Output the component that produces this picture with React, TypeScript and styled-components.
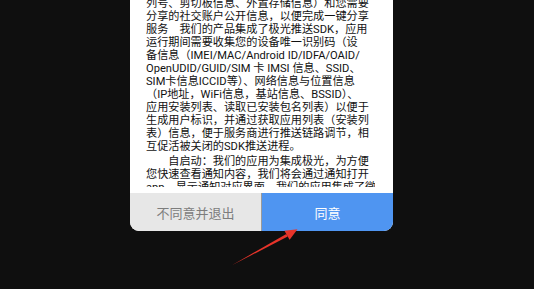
import React from "react";
import styled, { createGlobalStyle } from "styled-components";

const Global = createGlobalStyle`
  html, body { margin: 0; padding: 0; background: #0f0f0f; }
  body { width: 534px; height: 289px; overflow: hidden; }
`;

const Page = styled.div`
  position: relative;
  width: 534px;
  height: 289px;
  background: #0f0f0f;
  display: flex;
  align-items: flex-start;
  padding-left: 130px;
  box-sizing: border-box;
`;

const Dialog = styled.div`
  width: 263px;
  background: #ffffff;
  border-radius: 0 0 9px 9px;
  overflow: hidden;
  display: flex;
  flex-direction: column;
`;

const Body = styled.div`
  padding: 0 18px 6px 16px;
`;

const Scroll = styled.div`
  height: 187px;
  overflow: hidden;
`;

const Content = styled.div`
  margin-top: -3.2px;
  font-family: "Roboto", "Noto Sans CJK SC", sans-serif;
  font-size: 11.15px;
  line-height: 13px;
  color: #111111;
`;

const Para = styled.p<{ $gap?: boolean }>`
  margin: ${(p) => (p.$gap ? "2.6px 0 0" : "0")};
`;

const Line = styled.span`
  display: block;
  white-space: nowrap;
`;

const Buttons = styled.div`
  display: flex;
  height: 38px;
`;

const Btn = styled.button<{ $primary?: boolean }>`
  flex: 1;
  border: none;
  margin: 0;
  padding: 0;
  font-family: "Roboto", "Noto Sans CJK SC", sans-serif;
  font-size: 13px;
  background: ${(p) => (p.$primary ? "#4f95f1" : "#e7e7e7")};
  color: ${(p) => (p.$primary ? "#ffffff" : "#7d7d7d")};
  border-left: ${(p) => (p.$primary ? "1px solid #9a9a9a" : "none")};
  display: flex;
  align-items: center;
  justify-content: center;
`;

const Arrow = styled.svg`
  position: absolute;
  left: 0;
  top: 0;
  pointer-events: none;
`;

const para1 = [
  "列号、剪切板信息、外置存储信息）和您需要",
  "分享的社交账户公开信息，以便完成一键分享",
  "服务　我们的产品集成了极光推送SDK，应用",
  "运行期间需要收集您的设备唯一识别码（设",
  "备信息（IMEI/MAC/Android ID/IDFA/OAID/",
  "OpenUDID/GUID/SIM 卡 IMSI 信息、SSID、",
  "SIM卡信息ICCID等）、网络信息与位置信息",
  "（IP地址，WiFi信息，基站信息、BSSID）、",
  "应用安装列表、读取已安装包名列表）以便于",
  "生成用户标识，并通过获取应用列表（安装列",
  "表）信息，便于服务商进行推送链路调节，相",
  "互促活被关闭的SDK推送进程。",
];

const para2 = [
  "　　自启动：我们的应用为集成极光，为方便",
  "您快速查看通知内容，我们将会通过通知打开",
  "app，显示通知对应界面。我们的应用集成了微",
];

export default function App() {
  return (
    <>
      <Global />
      <Page>
        <Dialog>
          <Body>
            <Scroll>
              <Content>
                <Para>
                  {para1.map((l, i) => (
                    <Line key={i}>{l}</Line>
                  ))}
                </Para>
                <Para $gap>
                  {para2.map((l, i) => (
                    <Line key={i}>{l}</Line>
                  ))}
                </Para>
              </Content>
            </Scroll>
          </Body>
          <Buttons>
            <Btn>不同意并退出</Btn>
            <Btn $primary>同意</Btn>
          </Buttons>
        </Dialog>
        <Arrow width="534" height="289" viewBox="0 0 534 289">
          <polygon points="232.3,265 287.7,236.6 286.3,233.9" fill="#e8342a" />
          <polygon points="297.5,229.3 289.6,239.8 284.4,230.7" fill="#e8342a" />
        </Arrow>
      </Page>
    </>
  );
}
